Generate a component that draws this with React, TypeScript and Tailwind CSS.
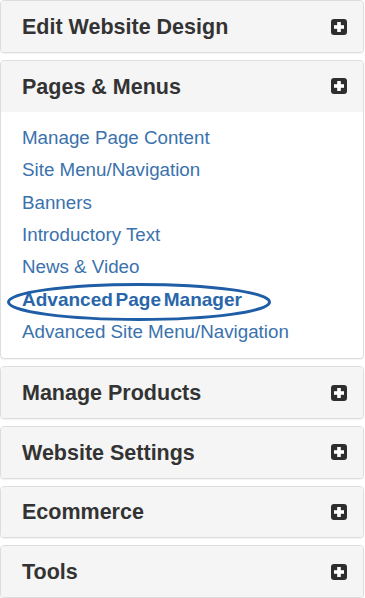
import React from 'react';

const sections = [
  { title: 'Edit Website Design', open: false },
  { title: 'Pages & Menus', open: true },
  { title: 'Manage Products', open: false },
  { title: 'Website Settings', open: false },
  { title: 'Ecommerce', open: false },
  { title: 'Tools', open: false },
];

const pageLinks = [
  'Manage Page Content',
  'Site Menu/Navigation',
  'Banners',
  'Introductory Text',
  'News & Video',
  'Advanced Page Manager',
  'Advanced Site Menu/Navigation',
];

function PlusSquare() {
  return (
    <svg width="16" height="16" viewBox="0 0 16 16" className="shrink-0">
      <rect x="0" y="0" width="16" height="16" rx="3" fill="#2e2e2e" />
      <rect x="6.2" y="3" width="3.6" height="10" fill="#fff" />
      <rect x="3" y="6.2" width="10" height="3.6" fill="#fff" />
    </svg>
  );
}

export default function App() {
  return (
    <div
      className="w-[365px] h-[598px] bg-white flex flex-col gap-[7px] pr-px"
      style={{ fontFamily: '"Liberation Sans", Arial, sans-serif' }}
    >
      {sections.map((section) => (
        <div
          key={section.title}
          className="border border-[#dddddd] rounded bg-white shadow-[0_1px_1px_rgba(0,0,0,0.05)] overflow-hidden"
        >
          <div className="h-[51px] bg-[#f5f5f5] flex items-center justify-between pl-[21px] pr-[16px]">
            <h3 className="text-[21.5px] font-bold text-[#333333] leading-none pt-[2px]">{section.title}</h3>
            <PlusSquare />
          </div>
          {section.open && (
            <ul className="pt-[10px] pb-[11px] pl-[21px]">
              {pageLinks.map((link) => {
                const highlighted = link === 'Advanced Page Manager';
                return (
                  <li key={link} className="relative leading-[32.4px] h-[32.4px]">
                    {highlighted ? (
                      <>
                        <a className="text-[19px] font-bold text-[#2a66aa] [word-spacing:-2.5px]">
                          {link}
                        </a>
                        <svg
                          className="absolute left-[-16px] top-[-1px] pointer-events-none"
                          width="266"
                          height="40"
                          viewBox="0 0 266 40"
                        >
                          <ellipse
                            cx="133"
                            cy="19"
                            rx="130.5"
                            ry="17.5"
                            fill="none"
                            stroke="#1f5ea6"
                            strokeWidth="3"
                          />
                        </svg>
                      </>
                    ) : (
                      <a className="text-[18.75px] text-[#3a72ad]">{link}</a>
                    )}
                  </li>
                );
              })}
            </ul>
          )}
        </div>
      ))}
    </div>
  );
}
